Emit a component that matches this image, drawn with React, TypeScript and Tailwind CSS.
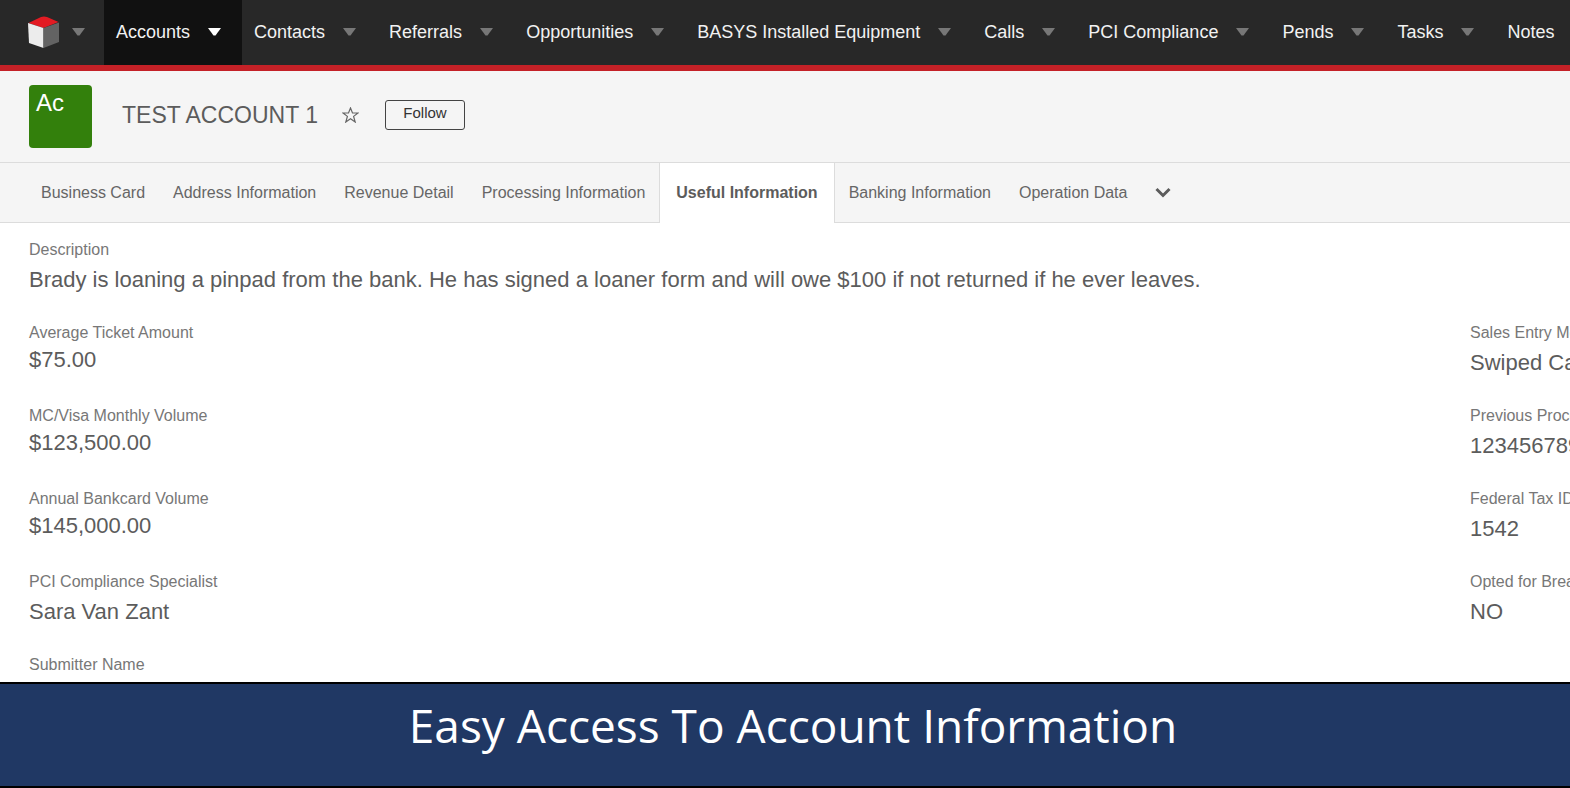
import React from 'react';

const modules = [
  { name: 'Accounts', active: true },
  { name: 'Contacts' },
  { name: 'Referrals' },
  { name: 'Opportunities' },
  { name: 'BASYS Installed Equipment' },
  { name: 'Calls' },
  { name: 'PCI Compliance' },
  { name: 'Pends' },
  { name: 'Tasks' },
  { name: 'Notes' },
];

const tabs = [
  'Business Card',
  'Address Information',
  'Revenue Detail',
  'Processing Information',
  'Useful Information',
  'Banking Information',
  'Operation Data',
];

const rows = [
  [
    { label: 'Average Ticket Amount', value: '$75.00', currency: true },
    { label: 'Sales Entry Method', value: 'Swiped Card' },
  ],
  [
    { label: 'MC/Visa Monthly Volume', value: '$123,500.00', currency: true },
    { label: 'Previous Processor', value: '123456789' },
  ],
  [
    { label: 'Annual Bankcard Volume', value: '$145,000.00', currency: true },
    { label: 'Federal Tax ID', value: '1542' },
  ],
  [
    { label: 'PCI Compliance Specialist', value: 'Sara Van Zant' },
    { label: 'Opted for Breach', value: 'NO' },
  ],
];

const Caret: React.FC<{ className: string }> = ({ className }) => (
  <svg viewBox="0 0 13 8" className={`h-2 w-[13px] shrink-0 ${className}`} fill="currentColor">
    <path d="M0 0h13L7.500 7.500h-2z" />
  </svg>
);

const Logo: React.FC = () => (
  <svg viewBox="0 0 31 32" className="h-8 w-[31px] shrink-0">
    <path d="M0.500 7L13 1Q16 0 19 1L30.500 6L15.500 12z" fill="#e31b23" />
    <path d="M0 7l15.500 5v20L1 27z" fill="#ececec" />
    <path d="M15.500 12L31 6.500V26l-15.500 6z" fill="#636363" />
  </svg>
);

type FieldProps = { label: string; value?: string; currency?: boolean };

const Field: React.FC<FieldProps> = ({ label, value, currency }) => (
  <div className="h-[83px] whitespace-nowrap">
    <dt className="text-base leading-6 text-[#777]">{label}</dt>
    <dd className={`text-[22px] text-[#5c5c5c] ${currency ? 'leading-[30px]' : 'leading-9'}`}>{value}</dd>
  </div>
);

const App: React.FC = () => {
  return (
    <div className="flex min-h-screen flex-col overflow-hidden bg-white font-['Liberation_Sans',Arial,sans-serif]">
      <nav className="flex h-[71px] overflow-hidden border-b-[6px] border-[#c42127] bg-[#282828] whitespace-nowrap">
        <button type="button" aria-label="Home" className="flex shrink-0 items-center gap-[13px] pr-[19px] pb-0.5 pl-7">
          <Logo />
          <Caret className="text-[#777]" />
        </button>
        {modules.map((m) => (
          <a
            key={m.name}
            href="#"
            className={`flex shrink-0 items-center gap-[18px] pr-[21px] pb-0.5 pl-3 text-lg text-[#f2f2f2] ${m.active ? 'bg-[#111]' : ''}`}
          >
            {m.name}
            <Caret className={m.active ? 'text-white' : 'text-[#777]'} />
          </a>
        ))}
      </nav>

      <header className="flex h-[92px] items-center border-b border-[#dcdcdc] bg-[#f5f5f5] pl-[29px]">
        <div className="h-[63px] w-[63px] rounded bg-[#33800c] px-[7px] text-2xl leading-9 text-white">Ac</div>
        <div className="ml-[30px] flex items-center pb-[3px]">
          <h1 className="text-[23px] text-[#5c5c5c]">TEST ACCOUNT 1</h1>
          <button type="button" aria-label="Favorite" className="ml-6 text-[#666]">
            <svg viewBox="0 0 17 16" className="h-4 w-[17px]" fill="none" stroke="currentColor" strokeWidth="1.200">
              <path d="M8.500 1l2 5h5.500l-4.400 3.400 1.600 5.600-4.700-3.300L3.800 15l1.600-5.600L1 6h5.500z" />
            </svg>
          </button>
          <button
            type="button"
            className="ml-[26px] h-[30px] w-20 rounded-[3px] border border-[#444] pb-1 text-[15px] text-[#333]"
          >
            Follow
          </button>
        </div>
      </header>

      <div className="flex h-[60px] bg-[#f5f5f5] whitespace-nowrap text-[#666]">
        <div className="w-[27px] border-b border-[#dcdcdc]" />
        {tabs.map((tab) => (
          <a
            key={tab}
            href="#"
            className={
              tab === 'Useful Information'
                ? 'flex items-center border-x border-[#dcdcdc] bg-white px-4 font-bold text-[#5c5c5c]'
                : 'flex items-center border-b border-[#dcdcdc] px-[14px]'
            }
          >
            {tab}
          </a>
        ))}
        <button
          type="button"
          aria-label="More tabs"
          className="flex flex-1 items-center border-b border-[#dcdcdc] pl-[14px]"
        >
          <svg viewBox="0 0 16 11" className="h-[11px] w-4" fill="none" stroke="#5c5c5c" strokeWidth="3">
            <path d="M1.500 2L8 8.500L14.500 2" />
          </svg>
        </button>
      </div>

      <main className="flex-1 pt-[15px] pl-[29px]">
        <dl>
          <Field label="Description" value="Brady is loaning a pinpad from the bank. He has signed a loaner form and will owe $100 if not returned if he ever leaves." />
          {rows.map(([left, right]) => (
            <div key={left.label} className="grid grid-cols-[1fr_100px]">
              <Field {...left} />
              <Field {...right} />
            </div>
          ))}
          <dt className="text-base leading-6 text-[#777]">Submitter Name</dt>
        </dl>
      </main>

      <footer className="h-[106px] border-y-2 border-black bg-[#203864] pl-4 text-center font-['Open_Sans',sans-serif] text-[46px] leading-[82px] text-white">
        Easy Access To Account Information
      </footer>
    </div>
  );
};

export default App;
